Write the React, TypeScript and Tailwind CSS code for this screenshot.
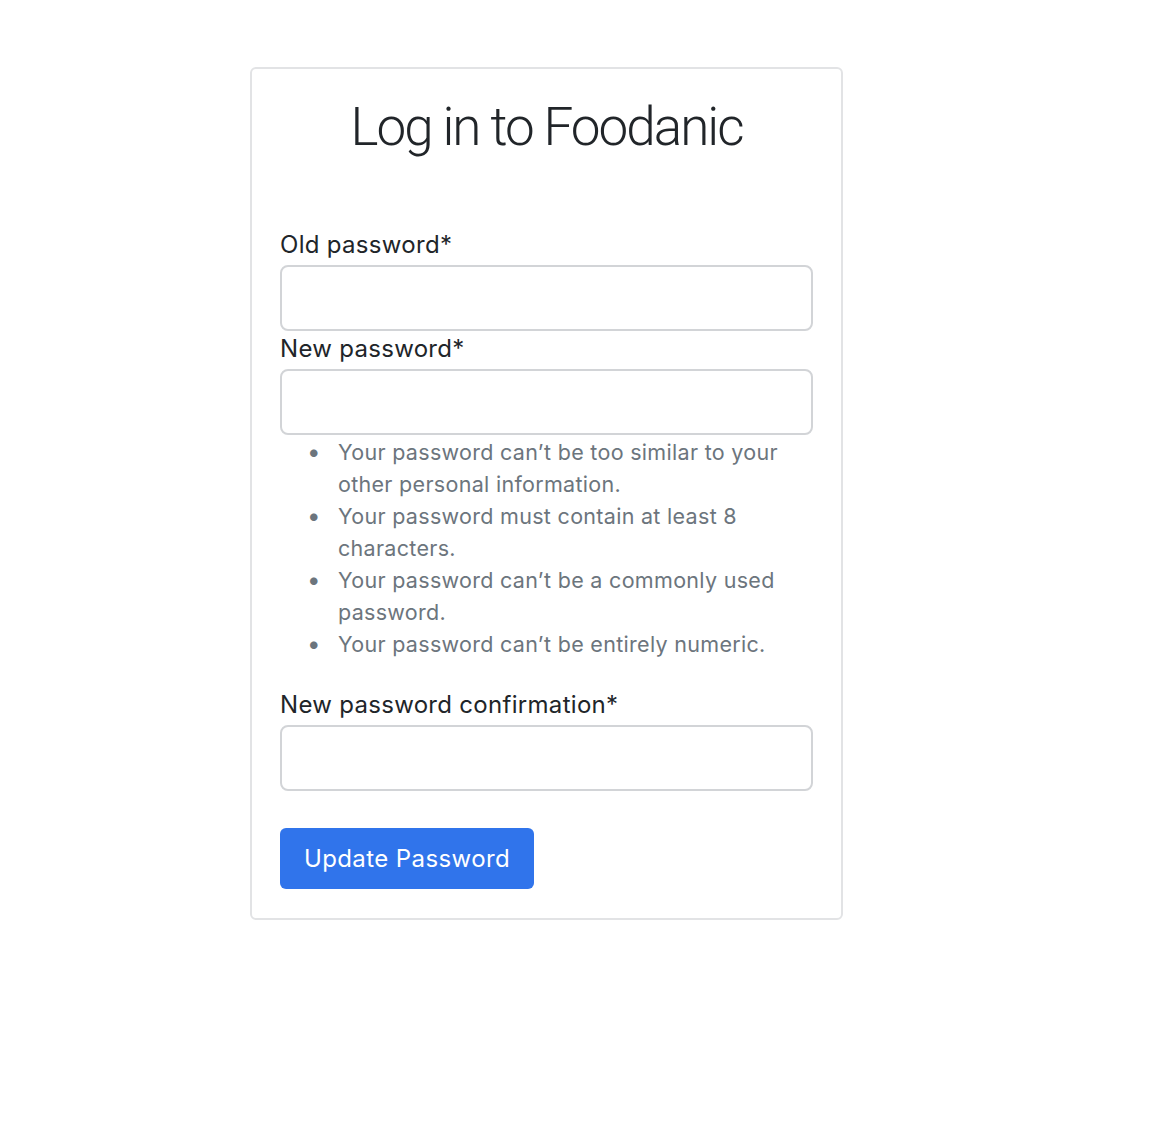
import React from "react";

const rules = [
  "Your password can’t be too similar to your other personal information.",
  "Your password must contain at least 8 characters.",
  "Your password can’t be a commonly used password.",
  "Your password can’t be entirely numeric.",
];

function Field({ label }: { label: string }) {
  return (
    <div>
      <label className="block text-[24px] leading-[36px] tracking-[0.3px] text-[#212529]">{label}</label>
      <input
        type="password"
        className="mt-[2px] block h-[66px] w-full rounded-[8px] border-2 border-[#d2d4d7] bg-white px-4 outline-none"
      />
    </div>
  );
}

export default function App() {
  return (
    <div
      className="min-h-[1146px] bg-white pl-[250px] pt-[67px]"
      style={{ fontFamily: "Inter, 'Liberation Sans', sans-serif" }}
    >
      <div className="w-[593px] rounded-[6px] border-2 border-[#e2e3e5] px-[28px] pb-[29px] pt-[22px]">
        <h1
          className="text-center text-[53px] font-light leading-[72px] tracking-[-2px] text-[#212529]"
          style={{ fontFamily: "Roboto, 'Liberation Sans', sans-serif" }}
        >
          Log in to Foodanic
        </h1>

        <form className="mt-[64px]" onSubmit={(e) => e.preventDefault()}>
          <Field label="Old password*" />
          <Field label="New password*" />
          <ul className="mt-[1px] pl-[27px] text-[21.5px] leading-[32px] tracking-[0.3px] text-[#6c757d]">
            {rules.map((r) => (
              <li key={r} className="flex">
                <span className="w-[31px] shrink-0 text-[24px] leading-[32px]">•</span>
                <span>{r}</span>
              </li>
            ))}
          </ul>
          <div className="mt-[27px]">
            <Field label="New password confirmation*" />
          </div>
          <button
            type="submit"
            className="mt-[37px] h-[61px] w-[254px] rounded-[6px] bg-[#3074eb] text-[24px] tracking-[0.4px] text-white"
          >
            Update Password
          </button>
        </form>
      </div>
    </div>
  );
}
